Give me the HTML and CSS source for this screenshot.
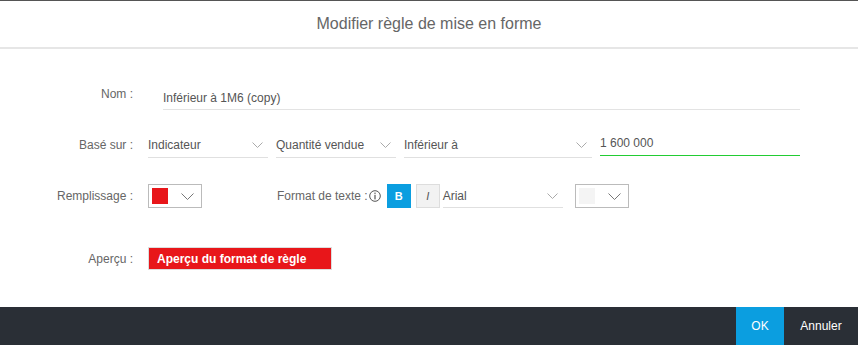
FILE: index.html
```html
<!DOCTYPE html>
<html lang="fr">
<head>
<meta charset="utf-8">
<title>Modifier règle de mise en forme</title>
<link rel="stylesheet" href="styles.css">
</head>
<body>
<div class="dialog">
  <header class="head">Modifier règle de mise en forme</header>
  <main class="body">
    <div class="row row-nom">
      <div class="label lbl-top">Nom :</div>
      <div class="field field-nom">Inférieur à 1M6 (copy)</div>
    </div>
    <div class="row row-base">
      <div class="label">Basé sur :</div>
      <div class="select w120"><span>Indicateur</span><svg class="chev" width="11" height="7" viewBox="0 0 11 7"><polyline points="0.5,0.5 5.5,5.5 10.5,0.5" fill="none" stroke="#aaa" stroke-width="1"/></svg></div>
      <div class="select w120"><span>Quantité vendue</span><svg class="chev" width="11" height="7" viewBox="0 0 11 7"><polyline points="0.5,0.5 5.5,5.5 10.5,0.5" fill="none" stroke="#aaa" stroke-width="1"/></svg></div>
      <div class="select w188"><span>Inférieur à</span><svg class="chev" width="11" height="7" viewBox="0 0 11 7"><polyline points="0.5,0.5 5.5,5.5 10.5,0.5" fill="none" stroke="#aaa" stroke-width="1"/></svg></div>
      <div class="field field-val">1 600 000</div>
    </div>
    <div class="row row-fill">
      <div class="label">Remplissage :</div>
      <div class="colorbox"><span class="swatch red"></span><svg class="chev2" width="13" height="8" viewBox="0 0 13 8"><polyline points="0.5,0.5 6.5,6.5 12.5,0.5" fill="none" stroke="#777" stroke-width="1"/></svg></div>
      <div class="fmt-label">Format de texte :<svg class="info" width="12" height="12" viewBox="0 0 12 12"><circle cx="6" cy="6" r="5.3" fill="none" stroke="#555" stroke-width="1"/><rect x="5.4" y="2.6" width="1.2" height="1.3" fill="#555"/><rect x="5.4" y="4.8" width="1.2" height="4.6" fill="#555"/></svg></div>
      <div class="btn-b">B</div>
      <div class="btn-i">I</div>
      <div class="select w120 font-sel"><span>Arial</span><svg class="chev" width="11" height="7" viewBox="0 0 11 7"><polyline points="0.5,0.5 5.5,5.5 10.5,0.5" fill="none" stroke="#aaa" stroke-width="1"/></svg></div>
      <div class="colorbox colorbox2"><span class="swatch blank"></span><svg class="chev2" width="13" height="8" viewBox="0 0 13 8"><polyline points="0.5,0.5 6.5,6.5 12.5,0.5" fill="none" stroke="#777" stroke-width="1"/></svg></div>
    </div>
    <div class="row row-preview">
      <div class="label">Aperçu :</div>
      <div class="preview">Aperçu du format de règle</div>
    </div>
  </main>
  <footer class="foot">
    <div class="fbtn ok">OK</div>
    <div class="fbtn cancel">Annuler</div>
  </footer>
</div>
</body>
</html>
```

FILE: styles.css
```css
* { box-sizing: border-box; }
html, body { margin: 0; padding: 0; background: #fff; }
body {
  font-family: "Liberation Sans", Arial, sans-serif;
  font-size: 12px;
  color: #555;
}
.dialog { width: 858px; height: 345px; display: flex; flex-direction: column; }
.head {
  height: 49px;
  border-top: 1px solid #555;
  border-bottom: 2px solid #e6e6e6;
  display: flex;
  align-items: center;
  justify-content: center;
  font-size: 16px;
  color: #666;
  padding-bottom: 1px;
}
.body {
  height: 258px;
  padding-top: 35px;
  display: flex;
  flex-direction: column;
}
.row { display: flex; align-items: center; }
.label {
  width: 133px;
  text-align: right;
  color: #666;
  margin-right: 15px;
  flex: none;
}
.row-nom { height: 26px; align-items: stretch; }
.lbl-top { padding-top: 3px; }
.field-nom {
  margin-left: 15px;
  width: 637px;
  border-bottom: 1px solid #e3e3e3;
  display: flex;
  align-items: flex-end;
  padding-bottom: 4px;
  color: #555;
}
.row-base { height: 26px; margin-top: 22px; }
.select {
  height: 26px;
  border-bottom: 1px solid #e0e0e0;
  display: flex;
  align-items: center;
  justify-content: space-between;
  padding-right: 5px;
  margin-right: 8px;
  color: #555;
  flex: none;
}
.w120 { width: 120px; }
.w188 { width: 188px; }
.chev { margin-top: 2px; }
.field-val {
  width: 200px;
  height: 24px;
  align-self: flex-start;
  border-bottom: 1px solid #22cc33;
  display: flex;
  align-items: center;
  padding-bottom: 2px;
}
.row-fill { height: 24px; margin-top: 26px; }
.colorbox {
  width: 54px;
  height: 24px;
  border: 1px solid #bbb;
  display: flex;
  align-items: center;
  padding-left: 3px;
  flex: none;
}
.swatch { width: 16px; height: 16px; display: block; }
.red { background: #e8161a; }
.blank { background: #f4f4f4; }
.chev2 { margin-left: 13px; margin-top: 1px; }
.fmt-label {
  margin-left: 75px;
  color: #666;
  display: flex;
  align-items: center;
}
.info { margin-left: 1px; }
.btn-b {
  margin-left: 6px;
  width: 24px;
  height: 24px;
  background: #0b9ee0;
  color: #fff;
  font-weight: bold;
  font-size: 11px;
  display: flex;
  align-items: center;
  justify-content: center;
}
.btn-i {
  margin-left: 5px;
  width: 24px;
  height: 24px;
  background: #f2f2f2;
  border: 1px solid #ddd;
  color: #555;
  font-style: italic;
  font-size: 11px;
  display: flex;
  align-items: center;
  justify-content: center;
}
.font-sel { margin-left: 3px; margin-right: 12px; height: 24px; }
.row-preview { height: 23px; margin-top: 39px; }
.preview {
  width: 184px;
  height: 23px;
  background: #e8161a;
  border: 1px solid #ddd;
  color: #fff;
  font-weight: bold;
  font-size: 12px;
  display: flex;
  align-items: center;
  padding-left: 8px;
}
.foot {
  height: 38px;
  background: #2a2f36;
  display: flex;
  justify-content: flex-end;
}
.fbtn {
  display: flex;
  align-items: center;
  justify-content: center;
  color: #fff;
  font-size: 12px;
}
.ok { width: 48px; background: #0b9ee0; }
.cancel { width: 74px; }
```
